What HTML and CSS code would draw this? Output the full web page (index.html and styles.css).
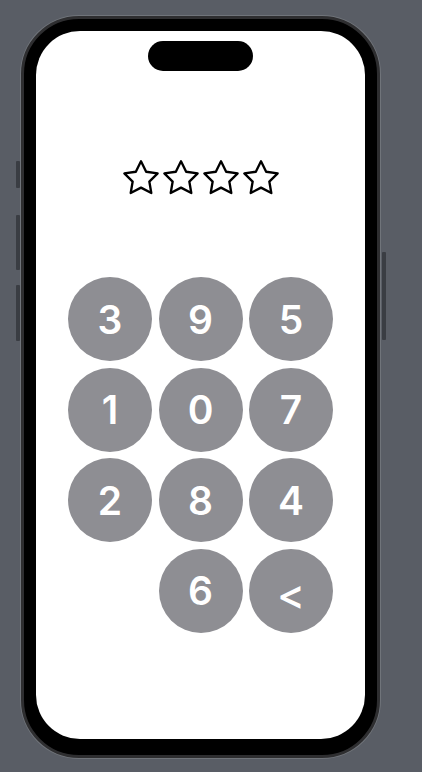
FILE: index.html
```html
<!DOCTYPE html>
<html lang="en">
<head>
    <meta charset="UTF-8">
    <meta name="viewport" content="width=device-width, initial-scale=1.0">
    <title>Passcode</title>
    <link rel="stylesheet" href="styles.css">
</head>
<body>
    <div class="phone">
        <!-- side buttons -->
        <span class="side-btn action"></span>
        <span class="side-btn vol-up"></span>
        <span class="side-btn vol-down"></span>
        <span class="side-btn power"></span>

        <div class="screen">
            <div class="island"></div>

            <div class="stars">
                <svg class="star" viewBox="0 0 24 24"><path d="M12 2l3.09 6.26L22 9.27l-5 4.87 1.18 6.88L12 17.77l-6.18 3.25L7 14.14 2 9.27l6.91-1.01L12 2z"/></svg>
                <svg class="star" viewBox="0 0 24 24"><path d="M12 2l3.09 6.26L22 9.27l-5 4.87 1.18 6.88L12 17.77l-6.18 3.25L7 14.14 2 9.27l6.91-1.01L12 2z"/></svg>
                <svg class="star" viewBox="0 0 24 24"><path d="M12 2l3.09 6.26L22 9.27l-5 4.87 1.18 6.88L12 17.77l-6.18 3.25L7 14.14 2 9.27l6.91-1.01L12 2z"/></svg>
                <svg class="star" viewBox="0 0 24 24"><path d="M12 2l3.09 6.26L22 9.27l-5 4.87 1.18 6.88L12 17.77l-6.18 3.25L7 14.14 2 9.27l6.91-1.01L12 2z"/></svg>
            </div>

            <div class="keypad">
                <button class="key">3</button>
                <button class="key">9</button>
                <button class="key">5</button>
                <button class="key">1</button>
                <button class="key">0</button>
                <button class="key">7</button>
                <button class="key">2</button>
                <button class="key">8</button>
                <button class="key">4</button>
                <span></span>
                <button class="key">6</button>
                <button class="key key-back">&lt;</button>
            </div>
        </div>
    </div>
</body>
</html>
```

FILE: styles.css
```css
body {
    margin: 0;
    height: 772px;
    background-color: #595d65;
    font-family: Inter, "Noto Sans", sans-serif;
    overflow: hidden;
}

.phone {
    position: relative;
    box-sizing: border-box;
    width: 359px;
    height: 742px;
    margin: 16px 0 0 21px;
    padding: 15px 15px 13px 15px;
    background: #000;
    border: 3px solid #2e2e30;
    border-radius: 58px;
    box-shadow: 0 0 0 1px #70747a;
}

.side-btn {
    position: absolute;
    width: 4px;
    background: #3a3d43;
    border-radius: 1px;
}

.action   { left: -8px; top: 142px; height: 27px; }
.vol-up   { left: -8px; top: 196px; height: 55px; }
.vol-down { left: -8px; top: 266px; height: 56px; }
.power    { right: -9px; top: 233px; height: 88px; }

.screen {
    box-sizing: border-box;
    height: 100%;
    margin: -3px;
    background: #fff;
    border-radius: 44px;
    display: flex;
    flex-direction: column;
    align-items: center;
    padding-top: 10px;
}

.island {
    width: 105px;
    height: 30px;
    background: #000;
    border-radius: 15px;
}

.stars {
    display: flex;
    margin-top: 87px;
}

.star {
    width: 40px;
    height: 40px;
    fill: none;
    stroke: #000;
    stroke-width: 1.4;
    stroke-linejoin: round;
}

.keypad {
    display: grid;
    grid-template-columns: repeat(3, 84px);
    grid-auto-rows: 84px;
    gap: 6.5px;
    margin-top: 79px;
}

.key {
    border: none;
    padding: 0;
    border-radius: 50%;
    background: #8e8e93;
    color: #fff;
    font-family: Inter, "Noto Sans", sans-serif;
    font-size: 39px;
    font-weight: 600;
    display: flex;
    align-items: center;
    justify-content: center;
}

.key-back {
    font-size: 42px;
    font-weight: 500;
    padding-top: 6px;
}
```
